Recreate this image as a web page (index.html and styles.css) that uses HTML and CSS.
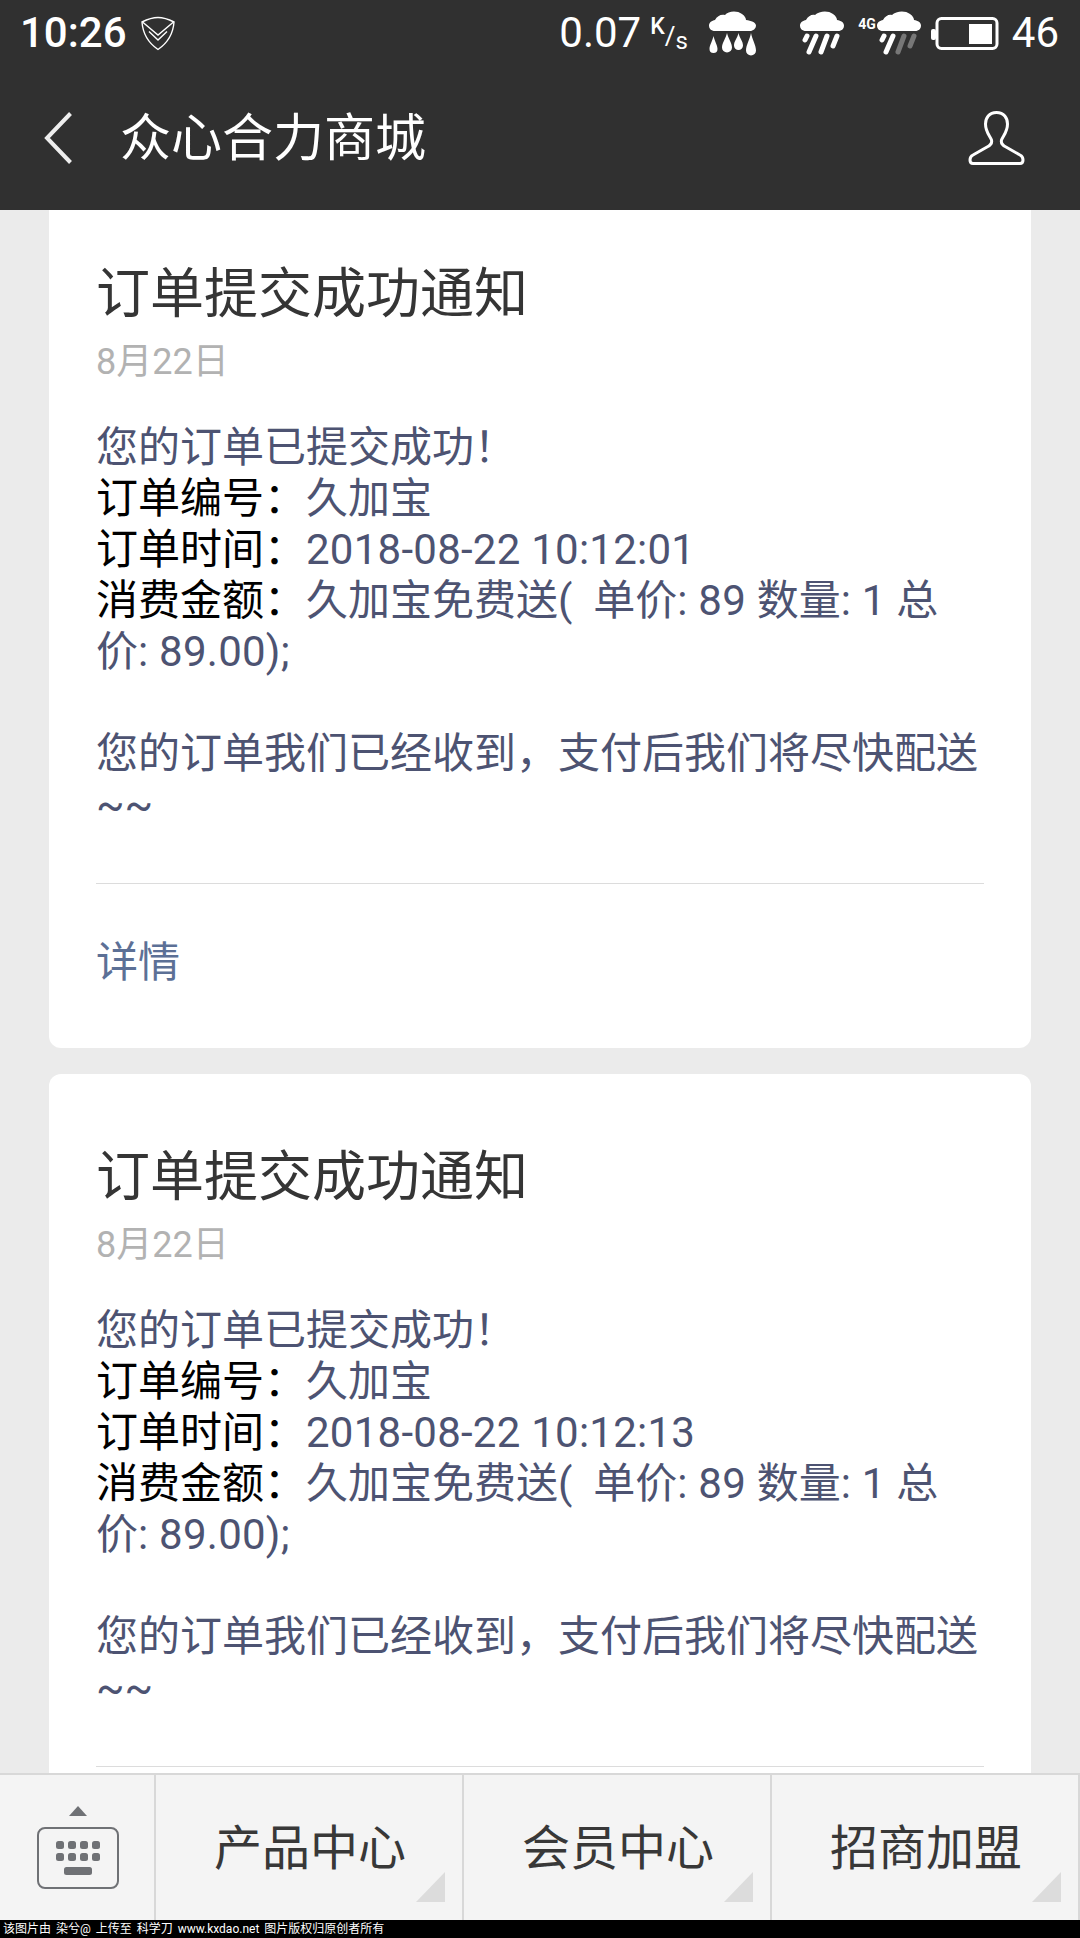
FILE: index.html
```html
<!DOCTYPE html>
<html lang="zh-CN">
<head>
	<meta charset="UTF-8">
	<title>众心合力商城</title>
	<link rel="stylesheet" href="styles.css">
</head>
<body>
	<svg class="defs" width="0" height="0">
		<defs>
			<path id="cloud" d="M6 20C2 20 0 17.5 0 14.5C0 11.5 3 9.5 6 9C8 5 12 3 15 4C19 0 28 -1 33 3C36 5 37 7.5 37 9C41 9.5 44 11.5 44 14.5C44 17.5 42 20 38 20Z"/>
		</defs>
	</svg>
	<header class="topbar">
		<div class="status">
			<div class="status-left">
				<span class="time">10:26</span>
				<svg class="shield" width="34" height="35" viewBox="0 0 34 35" fill="none" stroke="#fff" stroke-width="1.4">
					<path d="M17 33.5C9 28 2 20 1 6C8 2.5 13 1.5 17 1.5C21 1.5 26 2.5 33 6C32 20 25 28 17 33.5Z"/>
					<path d="M1.5 6L17 19L32.5 6"/>
					<path d="M8 15.5L17 24L26 15.5"/>
				</svg>
			</div>
			<div class="status-right">
				<span class="speed">0.07</span>
				<span class="unit"><i class="unit-k">K</i><i class="unit-slash">/</i><i class="unit-s">s</i></span>
				<svg class="drops" width="47" height="46" viewBox="0 0 47 46" fill="#fff">
					<path d="M6 21C2 21 0 18.5 0 15.5C0 12.5 3 10.5 6 10C8 6 12 4 16 5C19 1 28 0 33 4C36 6 37 8.5 37 10C42 10.5 47 12.5 47 15.5C47 18.5 44 21 41 21Z"/>
					<path d="M4.5 26C5.5 31 8.5 35 8.5 39A4 4 0 0 1 0.5 39C0.5 35 3.5 31 4.5 26Z"/>
					<path d="M18 23C19 28 23 33 23 37.5A5 5 0 0 1 13 37.5C13 33 17 28 18 23Z"/>
					<path d="M29.5 23C30.5 28 34 31 34 35.5A4.5 4.5 0 0 1 25 35.5C25 31 28.5 28 29.5 23Z"/>
					<path d="M42 23C43 29 47 35 47 40.5A5 5 0 0 1 37 40.5C37 35 41 29 42 23Z"/>
				</svg>
				<svg class="rain" width="44" height="44" viewBox="0 0 44 44" stroke="#fff" stroke-width="5" stroke-linecap="round">
					<use href="#cloud" fill="#fff" stroke="none"/>
					<path d="M7 25L5 29M16 25L9 41M27 25L21 41M37 25L33 35"/>
				</svg>
				<div class="signal">
					<span class="net">4G</span>
					<svg width="44" height="44" viewBox="0 0 44 44" stroke="#fff" stroke-width="5" stroke-linecap="round">
						<use href="#cloud" fill="#fff" stroke="none"/>
						<path d="M7 25L5 29M16 25L9 41"/>
						<path d="M27 25L21 41M37 25L33 35" stroke="#777"/>
					</svg>
				</div>
				<svg class="battery" width="68" height="33" viewBox="0 0 68 33">
					<rect x="0" y="12" width="5" height="11" rx="2" fill="#fff"/>
					<rect x="6" y="1.5" width="60" height="30" rx="4.5" fill="none" stroke="#fff" stroke-width="3"/>
					<rect x="38" y="7" width="23" height="20" fill="#fff"/>
				</svg>
				<span class="level">46</span>
			</div>
		</div>
		<div class="nav">
			<svg class="back" width="28" height="52" viewBox="0 0 28 52" fill="none" stroke="#eee" stroke-width="4">
				<path d="M26.5 1.5L3 26L26.5 50.5"/>
			</svg>
			<h1 class="nav-title">众心合力商城</h1>
			<svg class="user" width="57" height="54" viewBox="0 0 57 54" fill="none" stroke="#fff" stroke-width="3">
				<path d="M28.5 1.5C21 1.5 17.5 7 17.5 13C17.5 21 22 25 23.5 29C24.5 33 22 34.5 19 36L5 44C1 46 1 52.5 5 52.5L52 52.5C56 52.5 56 46 52 44L38 36C35 34.5 32.5 33 33.5 29C35 25 39.5 21 39.5 13C39.5 7 36 1.5 28.5 1.5Z"/>
			</svg>
		</div>
	</header>

	<main class="list">
		<section class="card">
			<h2 class="card-title">订单提交成功通知</h2>
			<p class="card-date">8月22日</p>
			<p class="card-body">
				您的订单已提交成功！<br>
				<b>订单编号：</b>久加宝<br>
				<b>订单时间：</b><span class="num">2018-08-22 10:12:01</span><br>
				<b>消费金额：</b>久加宝免费送(&nbsp; 单价<span class="num">: 89 </span>数量<span class="num">: 1 </span>总<br>
				价<span class="num">: 89.00);</span><br>
				<br>
				您的订单我们已经收到，支付后我们将尽快配送<br>
				~~
			</p>
			<div class="card-link">详情</div>
		</section>
		<section class="card">
			<h2 class="card-title">订单提交成功通知</h2>
			<p class="card-date">8月22日</p>
			<p class="card-body">
				您的订单已提交成功！<br>
				<b>订单编号：</b>久加宝<br>
				<b>订单时间：</b><span class="num">2018-08-22 10:12:13</span><br>
				<b>消费金额：</b>久加宝免费送(&nbsp; 单价<span class="num">: 89 </span>数量<span class="num">: 1 </span>总<br>
				价<span class="num">: 89.00);</span><br>
				<br>
				您的订单我们已经收到，支付后我们将尽快配送<br>
				~~
			</p>
		</section>
	</main>

	<footer class="menu">
		<div class="menu-key">
			<span class="key-arrow"></span>
			<svg width="82" height="62" viewBox="0 0 82 62" fill="#6f7175">
				<rect x="1" y="1" width="80" height="60" rx="7" fill="none" stroke="#6f7175" stroke-width="2"/>
				<rect x="19" y="14" width="8" height="8" rx="2.5"/>
				<rect x="31" y="14" width="8" height="8" rx="2.5"/>
				<rect x="43" y="14" width="8" height="8" rx="2.5"/>
				<rect x="55" y="14" width="8" height="8" rx="2.5"/>
				<rect x="19" y="26" width="8" height="8" rx="2.5"/>
				<rect x="31" y="26" width="8" height="8" rx="2.5"/>
				<rect x="43" y="26" width="8" height="8" rx="2.5"/>
				<rect x="55" y="26" width="8" height="8" rx="2.5"/>
				<rect x="27" y="40" width="28" height="8" rx="2.5"/>
			</svg>
		</div>
		<div class="menu-item">产品中心</div>
		<div class="menu-item">会员中心</div>
		<div class="menu-item">招商加盟</div>
	</footer>
	<div class="watermark">该图片由 染兮@ 上传至 科学刀 www.kxdao.net 图片版权归原创者所有</div>
</body>
</html>
```

FILE: styles.css
```css
*{
	margin: 0;
	padding: 0;
	box-sizing: border-box;
}
body{
	width: 1080px;
	height: 1938px;
	display: flex;
	flex-direction: column;
	overflow: hidden;
	background: #ebebeb;
	font-family: Roboto, "Noto Sans CJK SC", sans-serif;
}
.defs{
	display: block;
}

/* 顶部状态栏和导航 */
.topbar{
	height: 210px;
	flex: none;
	background: #303030;
	color: #fff;
}
.status{
	height: 66px;
	display: flex;
	justify-content: space-between;
	align-items: center;
	padding: 0 21px 0 20px;
}
.status-left, .status-right{
	display: flex;
	align-items: center;
}
.time{
	font-size: 42px;
	font-weight: 500;
	line-height: 66px;
}
.shield{
	margin-left: 14px;
}
.speed{
	font-size: 42px;
	line-height: 66px;
}
.unit{
	width: 38px;
	height: 36px;
	margin-left: 9px;
	display: flex;
	font-style: normal;
}
.unit i{
	font-style: normal;
	line-height: 1;
}
.unit-k{
	font-size: 23px;
	font-weight: 500;
}
.unit-slash{
	font-size: 26px;
	margin-top: 8px;
}
.unit-s{
	font-size: 24px;
	margin-top: 14px;
}
.drops{
	margin-left: 21px;
}
.rain{
	margin-left: 44px;
}
.signal{
	display: flex;
	margin-left: 14px;
	align-items: center;
}
.net{
	font-size: 14px;
	font-weight: 700;
	margin-bottom: 19px;
	margin-right: 1px;
}
.battery{
	margin-left: 10px;
}
.level{
	font-size: 42px;
	line-height: 66px;
	margin-left: 13px;
}
.nav{
	height: 144px;
	display: flex;
	align-items: center;
	padding: 0 55px 0 44px;
}
.back{
	flex: none;
}
.nav-title{
	flex: 1;
	margin-left: 48px;
	font-size: 51px;
	font-weight: 400;
	line-height: 1;
}

/* 消息卡片 */
.list{
	flex: 1;
	min-height: 0;
	overflow: hidden;
	padding: 0 49px;
}
.card{
	height: 857px;
	margin-bottom: 26px;
	padding: 70px 47px 0 47px;
	background: #fff;
	border-radius: 12px;
}
.card:first-child{
	margin-top: -19px;
}
.card-title{
	font-size: 54px;
	font-weight: 400;
	line-height: 68px;
	color: #353535;
}
.card-date{
	margin-top: 13px;
	font-size: 36px;
	line-height: 40px;
	color: #b2b2b2;
}
.card-body{
	margin-top: 40px;
	padding-bottom: 53px;
	border-bottom: 1px solid #dcdcdc;
	font-size: 42px;
	line-height: 51px;
	color: #4d5372;
	white-space: nowrap;
}
.card-body b{
	font-weight: 400;
	color: #000;
}
.num{
	letter-spacing: 0.25px;
}
.card-link{
	margin-top: 53px;
	font-size: 42px;
	line-height: 51px;
	color: #5c7096;
}

/* 底部菜单 */
.menu{
	height: 147px;
	flex: none;
	display: flex;
	background: #f4f4f4;
	border-top: 2px solid #d8d8d8;
	padding-right: 2px;
	position: relative;
}
.menu-key{
	width: 154px;
	flex: none;
	display: flex;
	flex-direction: column;
	align-items: center;
	padding: 31px 0 0 2px;
	gap: 11px;
}
.key-arrow{
	width: 0;
	height: 0;
	border-left: 9px solid transparent;
	border-right: 9px solid transparent;
	border-bottom: 10px solid #6f7175;
}
.menu-item{
	flex: 1;
	position: relative;
	display: flex;
	justify-content: center;
	align-items: center;
	padding: 0 0 8px 2px;
	border-left: 2px solid #d8d8d8;
	font-size: 48px;
	color: #383838;
}
.menu-item::after{
	content: "";
	position: absolute;
	right: 17px;
	bottom: 18px;
	width: 0;
	height: 0;
	border-left: 29px solid transparent;
	border-bottom: 30px solid #dcdcdc;
}
.menu::after{
	content: "";
	position: absolute;
	top: 0;
	right: 0;
	bottom: 0;
	width: 2px;
	background: #d8d8d8;
}
.watermark{
	height: 18px;
	flex: none;
	background: #000;
	color: #fff;
	font-size: 12px;
	line-height: 18px;
	padding-left: 3px;
	word-spacing: 2px;
	white-space: pre;
}
```
